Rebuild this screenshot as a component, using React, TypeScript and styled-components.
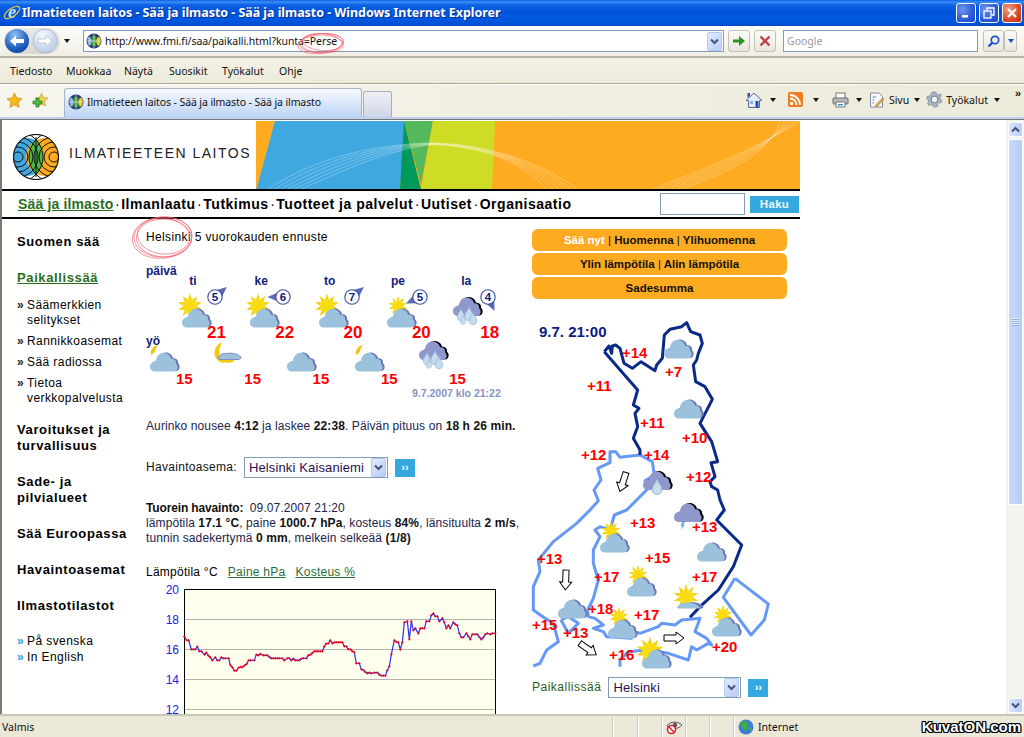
import React from "react";
import styled, { createGlobalStyle } from "styled-components";

const Global = createGlobalStyle`
  html, body { margin: 0; padding: 0; background: #fff; overflow: hidden; }
  * { box-sizing: border-box; }
`;

const SANS = `"Liberation Sans", Arial, sans-serif`;
const UI = `"Noto Sans", "Open Sans", sans-serif`;

const Win = styled.div`
  width: 1024px; height: 737px; overflow: hidden; display: flex; flex-direction: column; position: relative;
  font-family: ${SANS}; background: #fff;
`;
const TitleBar = styled.div`
  height: 26px; flex: none; display: flex; align-items: center; gap: 3px; padding: 0 2px 1px 3px;
  background: linear-gradient(#0a5fe8 0, #3b8ff6 2px, #0c61e6 5px, #0054d8 12px, #0058e0 21px, #0049c8 26px);
`;
const TitleIcon = styled.svg` flex: none; overflow: visible; `;
const TitleText = styled.div`
  flex: 1; color: #fff; font: bold 12.5px/16px ${UI}; text-shadow: 1px 1px 0 #0b2f8f; white-space: nowrap; margin-left: -2px; letter-spacing: -0.05px;
`;
const WinBtn = styled.div<{ $close?: boolean }>`
  width: 20px; height: 20px; border: 1px solid #fff; border-radius: 3px; display: flex; align-items: center; justify-content: center;
  background: ${(p) => p.$close ? "radial-gradient(circle at 30% 30%, #f0a085, #d8492a 60%, #b83014)" : "radial-gradient(circle at 30% 30%, #6f96ee, #2a5ad8 60%, #1f48c0)"};
`;
const AddressRow = styled.div`
  height: 32px; flex: none; display: flex; align-items: center; padding: 0 0 0 4px; position: relative;
  background: linear-gradient(#fdfdfb, #f1efe4); border-bottom: 2px solid #b8b6a8;
`;
const NavPill = styled.div`
  display: flex; align-items: center; width: 56px; height: 26px; border-radius: 13px; background: linear-gradient(#e8e8e4, #d8d8d2); position: relative;
`;
const Caret = styled.span<{ $c?: string }>`
  display: inline-block; width: 0; height: 0; border-left: 3.5px solid transparent; border-right: 3.5px solid transparent;
  border-top: 4px solid ${(p) => p.$c || "#111"};
`;
const BackCaret = styled(Caret)`
  margin-left: 4px;
`;
const AddressBox = styled.div`
  width: 641px; height: 22px; margin-left: 13px; border: 1px solid #7f9db9; background: #fff; display: flex; align-items: center; padding-left: 2px;
  font: 10.5px/14px ${UI}; color: #111; gap: 3px; flex: none;
`;
const AddressText = styled.span` flex: 1; letter-spacing: -0.06px; `;
const DropBtn = styled.div`
  width: 15px; height: 19px; margin-right: 1px; border: 1px solid #b4c8ee; border-radius: 2px; background: linear-gradient(135deg, #e2ebfe, #b8cdf8);
  display: flex; align-items: center; justify-content: center; flex: none;
`;
const ToolBtn = styled.div<{ $ml: number; $w?: number }>`
  width: ${(p) => p.$w || 22}px; height: 22px; margin-left: ${(p) => p.$ml}px; border: 1px solid #c4c2b6; border-radius: 3px; background: linear-gradient(#fbfbf9, #e8e6dc);
  display: flex; align-items: center; justify-content: center; flex: none;
`;
const SearchBox = styled.div`
  width: 195px; height: 22px; margin-left: 7px; border: 1px solid #7f9db9; background: #fff; color: #9a9a9a; font: 10.5px/20px ${UI}; padding-left: 3px; flex: none;
`;
const MenuRow = styled.div`
  height: 26px; flex: none; display: flex; align-items: center; font: 10.5px/14px ${UI}; color: #111; padding-left: 10px;
  background: linear-gradient(#f4f2e8, #ecead9); border-bottom: 1px solid #a8a69a;
`;
const MenuItem = styled.span<{ $w: number }>` width: ${(p) => p.$w}px; flex: none; `;
const TabRow = styled.div`
  height: 33px; flex: none; display: flex; align-items: flex-end; position: relative; padding-left: 6px;
  background: linear-gradient(90deg, #f6f5ee, #ecead9); border-top: 1px solid #fff;
`;
const FavIcons = styled.div` display: flex; gap: 9px; align-self: center; width: 58px; margin-top: -2px; `;
const Tab = styled.div`
  width: 298px; height: 29px; border: 1px solid #a7b4c8; border-bottom: none; border-radius: 3px 3px 0 0;
  background: linear-gradient(#f8fbff, #dfeafb 40%, #bdd5f6); display: flex; align-items: center; gap: 3px; padding: 0 0 2px 3px;
  font: 10.5px/14px ${UI}; letter-spacing: -0.1px; color: #111; white-space: nowrap;
`;
const NewTab = styled.div`
  width: 29px; height: 26px; border: 1px solid #a9afbc; border-bottom: none; border-radius: 3px 3px 0 0; margin-left: 1px;
  background: linear-gradient(#eef0f6, #cfd6e8);
`;
const RightTools = styled.div`
  margin-left: auto; align-self: center; display: flex; align-items: center; font: 10.5px/14px ${UI}; color: #111; padding-right: 24px; margin-top: -3px;
`;
const RTool = styled.span<{ $ml?: number; $g?: number }>`
  display: inline-flex; align-items: center; gap: ${(p) => p.$g ?? 5}px; margin-left: ${(p) => p.$ml || 0}px;
`;
const More = styled.span`
  position: absolute; right: 3px; top: 2px; font: bold 11px/12px ${SANS}; color: #111;
`;
const Strip = styled.div`
  height: 3px; flex: none; background: linear-gradient(#b9cdee 0, #c6d6f2 2px, #777 2px, #777 3px);
`;
const Body = styled.div` flex: 1; min-height: 0; display: flex; `;
const Page = styled.div`
  width: 1006px; flex: none; border-left: 2px solid #7a7a70; overflow: hidden; position: relative; background: #fff;
`;
const Sheet = styled.div` width: 798px; `;
const Header = styled.div`
  height: 69px; display: flex; align-items: center; padding-left: 11px; position: relative;
`;
const LogoText = styled.span`
  font: 14px/18px ${SANS}; letter-spacing: 1.5px; color: #222; margin-left: 10px; margin-top: -4px; white-space: nowrap;
`;
const LogoMark = styled.svg` margin-top: 4px; flex: none; `;
const Banner = styled.svg` position: absolute; left: 254px; top: 1px; `;
const TopNav = styled.div`
  height: 30px; border-top: 2px solid #000; border-bottom: 2px solid #000; display: flex; align-items: center; padding-left: 16px;
  font: bold 14px/18px ${SANS}; letter-spacing: 0.5px; color: #000; white-space: nowrap; position: relative;
`;
const NavLink = styled.a<{ $active?: boolean }>`
  color: ${(p) => (p.$active ? "#2a6e1c" : "#000")}; text-decoration: ${(p) => (p.$active ? "underline" : "none")};
  letter-spacing: ${(p) => (p.$active ? 0.15 : 0.52)}px;
`;
const Dot = styled.span` margin: 0 1.5px; font-weight: 400; letter-spacing: 0; `;
const SearchField = styled.div`
  width: 85px; height: 22px; border: 1px solid #7f9db9; background: #fff; margin-left: auto;
`;
const HakuBtn = styled.div`
  width: 49px; height: 17px; background: #35a8e0; color: #eef8ff; font: bold 11.5px/17px ${SANS}; letter-spacing: 0.3px; text-align: center; margin: 0 1px 0 5px;
`;
const Main = styled.div`
  display: grid; grid-template-columns: 144px 386px 268px; padding-top: 10px;
`;
const Side = styled.nav` padding: 5px 0 0 15px; display: flex; flex-direction: column; `;
const SideHead = styled.div<{ $mt?: number; $active?: boolean }>`
  font: bold 13px/16px ${SANS}; letter-spacing: 0.62px; margin-top: ${(p) => p.$mt ?? 20}px;
  color: ${(p) => (p.$active ? "#2a6e1c" : "#000")}; text-decoration: ${(p) => (p.$active ? "underline" : "none")}; white-space: nowrap;
`;
const SubList = styled.ul<{ $mt: number }>` list-style: none; margin: ${(p) => p.$mt}px 0 0; padding: 0; `;
const SubItem = styled.li<{ $mt?: number; $blue?: boolean }>`
  font: 12px/15px ${SANS}; letter-spacing: 0.42px; color: #000; padding-left: 10px; text-indent: -10px; margin-top: ${(p) => p.$mt ?? 6}px;
  &::before { content: "»"; display: inline-block; width: 10px; text-indent: 0; color: ${(p) => (p.$blue ? "#2f9be8" : "#222")}; font-weight: bold; letter-spacing: 0; }
`;
const Center = styled.div` display: flex; flex-direction: column; padding-top: 1px; `;
const Line = styled.div<{ $mt?: number }>`
  font: 12px/15px ${SANS}; letter-spacing: 0.1px; color: #22224c; margin-top: ${(p) => p.$mt ?? 0}px; white-space: nowrap;
  b { color: #111; }
`;
const ObsLabel = styled.b` letter-spacing: -0.14px; margin-right: 3px; `;
const Heading = styled.div`
  font: 12px/15px ${SANS}; letter-spacing: 0.37px; color: #000; white-space: nowrap;
`;
const Period = styled.div<{ $mt: number }>`
  font: bold 12px/15px ${SANS}; color: #10207c; margin-top: ${(p) => p.$mt}px;
`;
const DayGrid = styled.div` display: grid; grid-template-columns: repeat(5, 68.3px); margin: -5px 0 0 26px; `;
const DayCell = styled.div` height: 60px; position: relative; display: flex; flex-direction: column; `;
const DayName = styled.div`
  width: 42px; text-align: center; font: bold 12px/15px ${SANS}; color: #10207c;
`;
const IconSlot = styled.div<{ $l: number; $t: number }>`
  margin: ${(p) => p.$t}px 0 0 ${(p) => p.$l}px; height: 34px;
`;
const BigTemp = styled.div<{ $size: number; $l: number; $t: number }>`
  position: absolute; left: ${(p) => p.$l}px; top: ${(p) => p.$t}px; font: bold ${(p) => p.$size}px/20px ${SANS}; color: #f00;
`;
const WindBadge = styled.svg` position: absolute; left: 25px; top: 5px; overflow: visible; `;
const NightGrid = styled.div` display: grid; grid-template-columns: repeat(5, 68.3px); margin: -10px 0 0 -1px; `;
const NightCell = styled.div` height: 46px; position: relative; `;
const Stamp = styled.div`
  font: bold 10.5px/13px ${SANS}; color: #8594c4; margin: 2px 0 0 266px; white-space: nowrap;
`;
const FieldRow = styled.div<{ $mt: number; $gap: number }>`
  display: flex; align-items: center; gap: ${(p) => p.$gap}px; margin-top: ${(p) => p.$mt}px;
`;
const FieldLabel = styled.span<{ $green?: boolean }>`
  font: 12px/15px ${SANS}; letter-spacing: ${(p) => (p.$green ? 0.5 : 0.3)}px; color: ${(p) => (p.$green ? "#2a6020" : "#111")}; white-space: nowrap;
`;
const SelectBox = styled.div<{ $w: number }>`
  width: ${(p) => p.$w}px; height: 21px; border: 1px solid #7f9db9; background: #fff; display: flex; align-items: center; justify-content: space-between;
  font: 13px/17px ${SANS}; letter-spacing: 0.13px; color: #2a1050; padding-left: 4px; flex: none;
`;
const GoBtn = styled.div`
  width: 20px; height: 18px; background: #35a8e0; color: #fff; font: bold 11px/16px ${SANS}; text-align: center; flex: none;
`;
const ChartTabs = styled.div`
  margin-top: 19px; display: flex; font: 12px/15px ${SANS}; letter-spacing: 0.25px; white-space: nowrap;
`;
const ChartTab = styled.span<{ $link?: boolean; $ml?: number }>`
  margin-left: ${(p) => p.$ml || 0}px; color: ${(p) => (p.$link ? "#2a6e3a" : "#000")}; text-decoration: ${(p) => (p.$link ? "underline" : "none")};
`;
const ChartSvg = styled.svg` display: block; margin-top: 0; flex: none; `;
const RightCol = styled.div` display: flex; flex-direction: column; `;
const Pills = styled.div` display: flex; flex-direction: column; gap: 2px; width: 255px; `;
const Pill = styled.div`
  height: 22px; border-radius: 6px; background: #ffab22; text-align: center; font: bold 11.5px/22px ${SANS}; color: #111; white-space: nowrap;
`;
const PillNow = styled.span` color: #fff; `;
const PillSep = styled.span` font-weight: 400; `;
const MapCanvas = styled.div` width: 275px; height: 360px; margin: 11px 0 0 -7px; position: relative; `;
const MapLines = styled.svg` position: absolute; left: 0; top: 0; `;
const MapStamp = styled.div`
  position: absolute; left: 14px; top: 13px; font: bold 15px/18px ${SANS}; color: #0a2080;
`;
const Spot = styled.div<{ $x: number; $y: number }>`
  position: absolute; left: ${(p) => p.$x - 525}px; top: ${(p) => p.$y - 310}px;
`;
const MapTemp = styled(Spot)`
  font: bold 15px/18px ${SANS}; color: #f00; margin-top: -9px;
`;
const Scribble = styled.svg<{ $x: number; $y: number }>`
  position: absolute; left: ${(p) => p.$x}px; top: ${(p) => p.$y}px; pointer-events: none; overflow: visible;
`;
const Scroll = styled.div`
  width: 18px; flex: none; background: #f4f3ee; display: flex; flex-direction: column; padding: 2px 1px 1px 1px; border-left: 1px solid #eee;
`;
const ScrollBtn = styled.div`
  height: 15px; border: 1px solid #fff; border-radius: 2px; background: linear-gradient(90deg, #d8e4fb, #b8cdf7); display: flex; align-items: center; justify-content: center; flex: none;
`;
const ScrollThumb = styled.div`
  height: 366px; margin-top: 2px; border: 1px solid #fff; border-radius: 2px; background: linear-gradient(90deg, #c8d8f9, #b6ccf6); display: flex; align-items: center; justify-content: center; flex: none;
`;
const Grip = styled.div` width: 7px; height: 8px; background: repeating-linear-gradient(#eef3fe 0 1px, #8fa9dc 1px 2px); `;
const ScrollFill = styled.div` flex: 1; `;
const StatusBar = styled.div`
  height: 23px; flex: none; display: flex; align-items: center; position: relative; background: #ebe8d8; border-top: 2px solid #c8c6b8;
  font: 10.5px/14px ${UI}; color: #111;
`;
const StatusText = styled.span` width: 612px; padding-left: 2px; flex: none; `;
const StatusCell = styled.span<{ $w: number; $g?: number }>`
  width: ${(p) => p.$w}px; height: 21px; border-left: 1px solid #d0cebe; box-shadow: inset 1px 0 0 #fff; flex: none; display: flex; align-items: center; gap: ${(p) => p.$g ?? 0}px; padding-left: 4px;
`;
const Watermark = styled.span`
  position: absolute; right: 3px; top: 2px; font: bold 15px/18px ${SANS}; color: #fff; letter-spacing: 0;
  text-shadow: 1px 0 0 #000, -1px 0 0 #000, 0 1px 0 #000, 0 -1px 0 #000, 1px 1px 0 #000, -1px -1px 0 #000, 1px -1px 0 #000, -1px 1px 0 #000;
`;
const WeatherSvg = styled.svg` display: block; overflow: visible; `;

/* ---------- drawings ---------- */
const CLOUD = "M5 21C1.5 21 0 18.5 0 16C0 12.8 2.8 10.6 5.8 11C6.2 5.6 9.6 2.5 13.5 2.5C17.4 2.5 20.5 5.2 21 8.2C24.4 7.8 26.6 10.4 26 13.2C27.8 14.2 28.2 17.6 27 19.3C26 21 24.6 21 23.4 21Z";

const Cloud = ({ x, y, dark }: { x: number; y: number; dark?: boolean }) => (
  <g transform={`translate(${x} ${y})`}>
    <path d={CLOUD} fill={dark ? "#000" : "#6b77b9"} transform="translate(2 -0.5)" />
    <path d={CLOUD} fill={dark ? "#8f98cc" : "#9cc1dd"} />
  </g>
);
const Sun = ({ cx, cy, r, R }: { cx: number; cy: number; r: number; R: number }) => (
  <g>
    {Array.from({ length: 10 }).map((_, i) => {
      const a = (i * Math.PI) / 5 - Math.PI / 2;
      const p = (ang: number, rad: number) => `${cx + Math.cos(ang) * rad},${cy + Math.sin(ang) * rad}`;
      return <polygon key={i} points={`${p(a - 0.28, r)} ${p(a, R)} ${p(a + 0.28, r)}`} fill="#f5d20c" />;
    })}
    <circle cx={cx} cy={cy} r={r} fill="#f8dc10" />
  </g>
);
const Drop = ({ x, y, s = 1 }: { x: number; y: number; s?: number }) => (
  <path transform={`translate(${x} ${y}) scale(${s})`} d="M0 -7C1 -3 4 -1 4 2C4 4.5 2.2 6 0 6C-2.2 6 -4 4.5 -4 2C-4 -1 -1 -3 0 -7Z" fill="#c5dcee" stroke="#88a8cf" strokeWidth="0.6" />
);
type Kind = "sun" | "sunSmall" | "sunBig" | "cloud" | "moonCloud" | "moonFog" | "rain" | "rainOne" | "dark" | "sunThin";
const Weather = ({ kind }: { kind: Kind }) => (
  <WeatherSvg width="36" height="36" viewBox="0 0 36 36">
    {kind === "sun" && <Sun cx={13} cy={11} r={7} R={12.5} />}
    {kind === "sunSmall" && <Sun cx={16} cy={11} r={5.5} R={10} />}
    {kind === "sunBig" && <Sun cx={13} cy={15} r={8} R={14} />}
    {(kind === "sun" || kind === "sunSmall" || kind === "sunBig" || kind === "cloud") && <Cloud x={5} y={11.5} />}
    {kind === "moonCloud" && (<><path d="M13 6C8 7 5 11 6 16L10 13C10 11 11 8.5 13 6Z" fill="#f0c410" /><Cloud x={5} y={11.5} /></>)}
    {kind === "moonFog" && (
      <>
        <path d="M9 3C4 5 0 11 2 17C3.5 21 7 24 12 24C9 22 7 19 6.5 15C6 11 7 7 9 3Z" fill="#f2c80e" />
        <path d="M6 17.5C8 15 10 14 14 14.5C20 13.5 25 15 28 18C28.5 19 27.5 20.5 25 20.5H8C5 20.5 4.5 19 6 17.5Z" fill="#9cc1dd" stroke="#6b77b9" strokeWidth="0.8" />
        <path d="M8 21C12 24.5 18 25 22 21Z" fill="#f2c80e" />
      </>
    )}
    {kind === "sunThin" && (
      <>
        <Sun cx={14} cy={11} r={7} R={13} />
        <path d="M6 20C9 17 13 16 17 16.5C22 15.5 28 17 31 20C32 22 30 22.5 28 22.5H8C5 22.5 4.5 21.5 6 20Z" fill="#9cc1dd" />
        <path d="M18 16.5C22 15.5 28 17 31 20C32 22 30 22.5 28 22.5C28 20 24 17.5 18 16.5Z" fill="#6b77b9" />
      </>
    )}
    {kind === "rain" && (
      <>
        <Cloud x={1} y={0} dark />
        <Drop x={9} y={20} s={0.95} /><Drop x={17} y={19} s={1.1} /><Drop x={21} y={24} s={0.95} /><Drop x={11} y={25} s={0.7} />
      </>
    )}
    {kind === "rainOne" && (<><Cloud x={1} y={0} dark /><Drop x={15} y={18} s={1.25} /></>)}
    {kind === "dark" && (
      <>
        <Cloud x={3} y={0} dark />
        <path d="M11 21L9.5 25.5L11.5 25L10 29L14 24L12 24.5L14 21Z" fill="#6fa8dc" />
      </>
    )}
  </WeatherSvg>
);
const Wind = ({ n, angle }: { n: number; angle: number }) => (
  <WindBadge width="36" height="36" viewBox="0 0 36 36">
    <polygon points="22,13 22,23 33.5,18" fill="#5a6ab8" transform={`rotate(${angle} 18 18)`} />
    <circle cx="18" cy="18" r="7.2" fill="#fff" stroke="#3d4ea5" strokeWidth="1.1" />
    <text x="18" y="22" textAnchor="middle" fontFamily="Liberation Sans" fontWeight="bold" fontSize="11.5" fill="#10207c">{n}</text>
  </WindBadge>
);
const Globe = ({ s = 16 }: { s?: number }) => (
  <svg width={s} height={s} viewBox="0 0 16 16" style={{ flex: "none" }}>
    <circle cx="8" cy="8" r="7.5" fill="#28406c" />
    <path d="M3 3.5C5 5 6 6 6 8C6 10 5 12 3.5 13L2 11L1.5 5Z" fill="#8fb8e8" />
    <path d="M13 3.5C11 5 10 6 10 8C10 10 11 12 12.5 13L14.5 10.5V5Z" fill="#e8d020" />
    <path d="M6 3H10L10.5 8L10 13H6L5.5 8Z" fill="#3f9a3a" />
    <path d="M8 1V15M1 8H15" stroke="#dfe6f0" strokeWidth="0.7" />
  </svg>
);
const Down = ({ c = "#45527c" }: { c?: string }) => (
  <svg width="9" height="7" viewBox="0 0 9 7" style={{ display: "block" }}><path d="M1 1.5L4.5 5L8 1.5" fill="none" stroke={c} strokeWidth="2" /></svg>
);
const Star = ({ s = 17 }: { s?: number }) => (
  <svg width={s} height={s} viewBox="0 0 17 17" style={{ display: "block", flex: "none" }}><path d="M8.5 1L10.7 6L16 6.6L12 10.2L13.2 15.5L8.5 12.8L3.8 15.5L5 10.2L1 6.6L6.3 6Z" fill="#f7b818" stroke="#c88a10" strokeWidth="0.7" /></svg>
);

const CHART: [number, number][] = [[163,230],[170,240],[176,241],[184,268],[190,268],[196,268],[202,260],[208,274],[214,274],[224,284],[229,278],[235,287],[241,292],[247,301],[256,292],[262,301],[268,301],[274,292],[280,295],[286,295],[296,295],[301,315],[307,322],[313,332],[319,332],[326,323],[332,321],[338,321],[344,316],[350,312],[356,301],[362,301],[373,301],[379,284],[385,286],[391,282],[400,286],[406,286],[412,286],[418,291],[424,295],[430,295],[436,295],[442,295],[448,295],[457,295],[463,301],[472,295],[478,295],[484,301],[490,296],[496,301],[502,301],[508,301],[514,296],[520,295],[529,295],[535,286],[541,284],[547,279],[553,274],[559,274],[565,274],[571,274],[577,274],[583,259],[589,251],[595,250],[601,241],[607,250],[613,247],[619,247],[625,247],[631,247],[637,247],[643,259],[649,259],[655,268],[661,268],[667,274],[673,277],[679,310],[688,310],[694,328],[700,330],[706,336],[712,340],[718,338],[724,340],[733,338],[742,338],[748,344],[754,347],[760,347],[766,347],[772,331],[778,319],[784,283],[793,241],[799,246],[805,247],[811,268],[817,247],[823,187],[832,184],[838,238],[844,184],[850,211],[856,205],[865,220],[871,205],[877,205],[883,205],[889,184],[898,184],[904,166],[910,160],[916,169],[922,169],[928,184],[937,175],[943,187],[949,205],[955,196],[961,205],[970,187],[976,193],[982,196],[988,220],[994,232],[1000,232],[1009,220],[1015,229],[1021,238],[1027,223],[1036,223],[1042,223],[1048,231],[1054,238],[1060,232],[1066,223],[1072,220],[1081,223],[1087,220],[1096,220]];

const Chart = () => {
  const pts = CHART.map(([x, y]) => [x / 3 - 16, y / 3 - 20]);
  return (
    <ChartSvg width="360" height="140" viewBox="0 0 360 140">
      <rect x="38.5" y="9.5" width="311" height="135" fill="#ffffee" stroke="#000" strokeWidth="1" />
      {[39.5, 69.5, 99.5, 129.5].map((y) => <line key={y} x1="39" x2="349" y1={y} y2={y} stroke="#b4b4ac" strokeWidth="1" />)}
      {[[20, 14], [18, 44], [16, 74], [14, 104], [12, 134]].map(([t, y]) => (
        <text key={t} x="33" y={y} textAnchor="end" fontFamily="Liberation Sans" fontSize="12" fill="#2020e8">{t}</text>
      ))}
      <polyline points={pts.map((p) => p.join(",")).join(" ")} fill="none" stroke="#3030f5" strokeWidth="1.2" />
      <path d={pts.map(([x, y]) => `M${x - 1.3} ${y}h2.6M${x} ${y - 1.3}v2.6`).join("")} stroke="#f00010" strokeWidth="0.8" fill="none" />
    </ChartSvg>
  );
};

const ellipseRings = (cx: number, cy: number, rx: number, ry: number) =>
  [[0, 0, 1, -3], [1, 1, 0.95, 2], [-1, 0.5, 1.03, -6], [0.5, -1, 0.9, 5]].map(([dx, dy, k, r], i) => (
    <ellipse key={i} cx={cx + dx} cy={cy + dy} rx={rx * k} ry={ry * k} transform={`rotate(${r} ${cx} ${cy})`} fill="none" stroke="#f0606c" strokeWidth="0.8" opacity="0.8" />
  ));

const Arrow = ({ x, y, a }: { x: number; y: number; a: number }) => (
  <g transform={`translate(${x} ${y}) rotate(${a})`}>
    <polygon points="-10,-3 2,-3 2,-6 10,0 2,6 2,3 -10,3" fill="#fff" stroke="#000" strokeWidth="1" />
  </g>
);

const MAP_DARK1 = "238,125 252,108 260,130 262,108 272,105 285,115 297,160 322,175 348,155 390,182 395,165 412,145 418,75 435,58 470,50 485,38 497,65 525,75 532,100 520,130 515,150 505,165 512,215 540,230 562,268 525,340 560,395 578,455 558,458 570,500 555,515 560,530 578,540 585,570 598,600 575,630 650,705 625,770 580,840 525,890 495,922";
const MAP_DARK2 = "238,125 290,185 338,240 325,285 342,295 330,310 338,350 325,385 345,420 345,435";
const MAP_LIGHT1 = "345,435 285,442 272,425 255,425 255,458 218,475 228,510 207,540 220,572 195,600 155,640 85,695 40,750 45,785 25,830 25,900 60,925 85,940 100,995 65,1020 55,1040 45,1060 25,1068";
const MAP_LIGHT2 = "345,435 382,455 388,495 360,512 375,530 305,600 268,615 255,660 225,650 210,660 225,680 205,720 205,760 220,810 205,865 188,900 190,920 210,925 235,945 205,955 235,965 245,980 320,985 330,965 345,970 400,950 410,940 450,945 470,930 525,925 510,965 545,985 560,1005 550,1000 515,1020 500,1010 490,1050 430,1030 360,1020 310,1025 285,1050 285,1070";
const MAP_LAKE = "108,930 130,920 160,940 130,970 108,930";
const MAP_ISLE = "630,805 595,862 678,975 718,930 730,882 630,805";

const TEMPS: [string, number, number][] = [["+14",622,353],["+7",665,372],["+11",587,386],["+11",640,423],["+10",682,438],["+12",581,455],["+14",644,455],["+12",686,477],["+13",630,523],["+13",692,527],["+15",645,558],["+17",594,577],["+17",692,577],["+13",537,559],["+18",588,609],["+17",634,615],["+15",532,625],["+13",563,633],["+16",609,655],["+20",712,647]];
const ICONS: [Kind, number, number][] = [["cloud",659,326],["cloud",669,386],["rainOne",642,469],["dark",671,501],["sunSmall",595,520],["cloud",692,529],["sunSmall",622,564],["sunThin",672,586],["cloud",553,586],["sunSmall",603,606],["sunSmall",707,604],["sunBig",637,636]];

const DAYS: { d: string; n: number; a: number; k: Kind; t: number; l: number }[] = [
  { d: "ti", n: 5, a: -40, k: "sun", t: 21, l: 5 },
  { d: "ke", n: 6, a: 180, k: "sun", t: 22, l: 5 },
  { d: "to", n: 7, a: -40, k: "sun", t: 20, l: 5 },
  { d: "pe", n: 5, a: 155, k: "sunSmall", t: 20, l: 5 },
  { d: "la", n: 4, a: 65, k: "rain", t: 18, l: 7 },
];
const NIGHTS: Kind[] = ["moonCloud", "moonFog", "cloud", "moonCloud", "rain"];

export default function App() {
  return (
    <Win>
      <Global />
      <TitleBar>
        <TitleIcon width="18" height="18" viewBox="0 0 18 18">
          <text x="9" y="14" textAnchor="middle" fontFamily="Liberation Serif" fontStyle="italic" fontWeight="bold" fontSize="18" fill="#bfe6ff">e</text>
          <ellipse cx="9" cy="8.5" rx="9" ry="4" fill="none" stroke="#f2c23c" strokeWidth="1.2" transform="rotate(-35 9 8.5)" />
        </TitleIcon>
        <TitleText>Ilmatieteen laitos - Sää ja ilmasto - Sää ja ilmasto - Windows Internet Explorer</TitleText>
        <WinBtn><svg width="12" height="12" viewBox="0 0 12 12"><rect x="2" y="8" width="6" height="2.5" fill="#fff" /></svg></WinBtn>
        <WinBtn><svg width="14" height="14" viewBox="0 0 14 14" fill="none" stroke="#fff" strokeWidth="1.3"><rect x="2" y="5" width="7" height="7" /><path d="M5 4.5V2H12V9H9.5" /></svg></WinBtn>
        <WinBtn $close><svg width="12" height="12" viewBox="0 0 12 12"><path d="M2 2L10 10M10 2L2 10" stroke="#fff" strokeWidth="2.2" /></svg></WinBtn>
      </TitleBar>

      <AddressRow>
        <NavPill>
          <svg width="56" height="26" viewBox="0 0 56 26">
            <defs>
              <radialGradient id="bk" cx="0.4" cy="0.25" r="0.9"><stop offset="0" stopColor="#8fc0f0" /><stop offset="0.6" stopColor="#1f62c0" /><stop offset="1" stopColor="#0c3a8a" /></radialGradient>
              <radialGradient id="fw" cx="0.4" cy="0.25" r="0.9"><stop offset="0" stopColor="#f4f8ff" /><stop offset="1" stopColor="#aec4e4" /></radialGradient>
            </defs>
            <circle cx="13" cy="13" r="12" fill="url(#bk)" />
            <path d="M6 13L12 7.5V11H20V15H12V18.5Z" fill="#fff" />
            <circle cx="41" cy="13" r="12" fill="url(#fw)" stroke="#b0bccc" />
            <path d="M48 13L42 7.5V11H34V15H42V18.5Z" fill="#fff" stroke="#a8b8d0" strokeWidth="0.7" />
          </svg>
        </NavPill>
        <BackCaret />
        <AddressBox>
          <Globe />
          <AddressText>http://www.fmi.fi/saa/paikalli.html?kunta=Perse</AddressText>
          <DropBtn><Down /></DropBtn>
        </AddressBox>
        <ToolBtn $ml={4}><svg width="14" height="12" viewBox="0 0 14 12"><path d="M1 4.5H7V1L13 6L7 11V7.5H1Z" fill="#2f8f28" /></svg></ToolBtn>
        <ToolBtn $ml={4}><svg width="12" height="12" viewBox="0 0 12 12"><path d="M1.5 1.5L10.5 10.5M10.5 1.5L1.5 10.5" stroke="#c0404c" strokeWidth="2.4" /></svg></ToolBtn>
        <SearchBox>Google</SearchBox>
        <ToolBtn $ml={5} $w={21}><svg width="13" height="13" viewBox="0 0 13 13" fill="none" stroke="#1a50c8" strokeWidth="1.7"><circle cx="8" cy="5" r="3.7" /><path d="M5.4 7.6L1.5 11.5" strokeWidth="2.2" /></svg></ToolBtn>
        <ToolBtn $ml={0} $w={13}><Caret $c="#1a50c8" /></ToolBtn>
        <Scribble $x={298} $y={4} width="50" height="26">{ellipseRings(23.5, 13, 22, 9.5)}</Scribble>
      </AddressRow>

      <MenuRow>
        <MenuItem $w={56}>Tiedosto</MenuItem>
        <MenuItem $w={58}>Muokkaa</MenuItem>
        <MenuItem $w={45}>Näytä</MenuItem>
        <MenuItem $w={53}>Suosikit</MenuItem>
        <MenuItem $w={57}>Työkalut</MenuItem>
        <MenuItem $w={40}>Ohje</MenuItem>
      </MenuRow>

      <TabRow>
        <FavIcons>
          <Star />
          <svg width="17" height="17" viewBox="0 0 17 17" style={{ display: "block" }}>
            <path d="M9.5 1L11.5 5.5L16 6L12.5 9.5L13.5 14L9.5 12L5 14L6.5 9.5L3 6L7.5 5.5Z" fill="#f0cf50" stroke="#b89a30" strokeWidth="0.6" />
            <path d="M4 6H7V9H10V12H7V15H4V12H1V9H4Z" fill="#4fb83a" stroke="#1f7a1f" strokeWidth="0.7" />
          </svg>
        </FavIcons>
        <Tab><Globe />Ilmatieteen laitos - Sää ja ilmasto - Sää ja ilmasto</Tab>
        <NewTab />
        <RightTools>
          <RTool $g={7}>
            <svg width="18" height="18" viewBox="0 0 18 18"><path d="M9 2L1 9.5H3.5V16.5H14.5V9.5H17Z" fill="#e4ebf6" stroke="#5a6a98" strokeWidth="1" /><rect x="10.5" y="10" width="3" height="6.5" fill="#1f4fa8" /><rect x="5" y="10" width="3" height="3" fill="#8fb0e0" /><path d="M2.5 2H5V5L2.5 7Z" fill="#3a4ea8" /></svg>
            <Caret />
          </RTool>
          <RTool $ml={12} $g={10}>
            <svg width="15" height="15" viewBox="0 0 15 15"><rect width="15" height="15" rx="2" fill="#ee7b1e" /><circle cx="3.6" cy="11.4" r="1.7" fill="#fff" /><path d="M2 6.5A6.5 6.5 0 0 1 8.5 13M2 3A10 10 0 0 1 12 13" fill="none" stroke="#fff" strokeWidth="1.8" /></svg>
            <Caret />
          </RTool>
          <RTool $ml={13} $g={7}>
            <svg width="17" height="16" viewBox="0 0 17 16"><rect x="4" y="1" width="9" height="6" fill="#fff" stroke="#777" /><rect x="1" y="6" width="15" height="6" rx="1" fill="#b8b8b8" stroke="#666" /><rect x="4" y="10" width="9" height="5" fill="#fff" stroke="#777" /><rect x="6" y="12" width="5" height="1.5" fill="#3a8fc8" /></svg>
            <Caret />
          </RTool>
          <RTool $ml={7} $g={4}>
            <svg width="16" height="16" viewBox="0 0 16 16"><path d="M1.5 1H10L13.5 4.5V15H1.5Z" fill="#f8f8fa" stroke="#8a8a96" /><path d="M3.5 5H7M3.5 8H5M3.5 11H5" stroke="#6a78a8" /><path d="M7 12.5L13.5 6L15 7.5L8.5 14L6.5 14.5Z" fill="#d8b048" stroke="#806020" strokeWidth="0.5" /></svg>
            Sivu
          </RTool>
          <RTool $ml={5}><Caret /></RTool>
          <RTool $ml={6} $g={3}>
            <svg width="17" height="17" viewBox="0 0 17 17"><path d="M7 1H10L10.4 3L12.6 3.9L14.3 2.8L15.2 5L13.9 6.7L14.4 8.5L16 9.5L15 12L13 11.6L11.6 13L12 15L9.5 16H7.5L6.8 14.2L4.7 13.6L3 14.6L1.5 12.5L2.6 10.8L2 8.6L0.6 7.5L1.6 5L3.5 5.2L5 3.7L5 2Z" fill="#a8b4c4" stroke="#6a7888" strokeWidth="0.6" /><circle cx="8.5" cy="8.5" r="3.4" fill="#eef2f6" stroke="#6a7888" /></svg>
            Työkalut
          </RTool>
          <RTool $ml={6}><Caret /></RTool>
        </RightTools>
        <More>»</More>
      </TabRow>
      <Strip />

      <Body>
        <Page>
          <Sheet>
            <Header>
              <LogoMark width="46" height="46" viewBox="0 0 46 46">
                <defs>
                  <clipPath id="lc"><circle cx="23" cy="23" r="22.5" /></clipPath>
                </defs>
                <g clipPath="url(#lc)">
                  <rect width="46" height="46" fill="#fff" />
                  <circle cx="14" cy="23" r="19" fill="#3fa8e0" />
                  <circle cx="32" cy="23" r="19" fill="#ffab22" />
                  <path d="M23 5.5C28 10 29.5 16 29.5 23C29.5 30 28 36 23 40.5C18 36 16.5 30 16.5 23C16.5 16 18 10 23 5.5Z" fill="#4ab848" />
                  <g fill="none" stroke="#111" strokeWidth="1">
                    {[5, 10, 15, 20, 25].map((r) => <circle key={r} cx="5" cy="23" r={r} />)}
                    {[5, 10, 15, 20, 25].map((r) => <circle key={"b" + r} cx="41" cy="23" r={r} />)}
                    <path d="M23 3V43" />
                  </g>
                </g>
                <circle cx="23" cy="23" r="22.5" fill="none" stroke="#111" strokeWidth="1.2" />
              </LogoMark>
              <LogoText>ILMATIEETEEN LAITOS</LogoText>
              <Banner width="544" height="68" viewBox="256 121 544 68">
                <rect x="256" y="121" width="544" height="68" fill="#ffab22" />
                <polygon points="275,121 406,121 400,189 256.5,189" fill="#3fa8e0" />
                <polygon points="404,121 400,189 421,189" fill="#009a5c" />
                <polygon points="404,121 433,121 421,184" fill="#55b85a" />
                <polygon points="433,121 495,121 492,189 421,189" fill="#cfdc26" />
                <g fill="none" stroke="#fff" strokeOpacity="0.42" strokeWidth="0.7">
                  {[0, 3, 6, 9, 12, 15].map((d) => (
                    <g key={d}>
                      <path d={`M${268 + d * 2.2} 189C${315 + d * 2} ${158 + d * 0.8} ${375 + d} ${144 + d * 0.3} ${430 + d * 0.3} ${143 + d * 0.1}C${490 + d} ${143 + d * 0.4} ${545 - d} ${165 + d * 0.5} ${577 - d * 2} 189`} />
                      <path d={`M${653 + d * 2} 189C${700 + d * 1.5} ${170 + d * 0.2} ${745 + d * 1.5} ${155 + d * 0.2} ${802 - d * 1.4} ${120}`} />
                    </g>
                  ))}
                </g>
              </Banner>
            </Header>
            <TopNav>
              <NavLink $active>Sää ja ilmasto</NavLink><Dot>·</Dot>
              <NavLink>Ilmanlaatu</NavLink><Dot>·</Dot>
              <NavLink>Tutkimus</NavLink><Dot>·</Dot>
              <NavLink>Tuotteet ja palvelut</NavLink><Dot>·</Dot>
              <NavLink>Uutiset</NavLink><Dot>·</Dot>
              <NavLink>Organisaatio</NavLink>
              <SearchField />
              <HakuBtn>Haku</HakuBtn>
            </TopNav>
            <Main>
              <Side>
                <SideHead $mt={0}>Suomen sää</SideHead>
                <SideHead $active>Paikallissää</SideHead>
                <SubList $mt={12}>
                  <SubItem $mt={0}>Säämerkkien selitykset</SubItem>
                  <SubItem>Rannikkoasemat</SubItem>
                  <SubItem>Sää radiossa</SubItem>
                  <SubItem>Tietoa verkkopalvelusta</SubItem>
                </SubList>
                <SideHead $mt={16}>Varoitukset ja<br />turvallisuus</SideHead>
                <SideHead>Sade- ja<br />pilvialueet</SideHead>
                <SideHead>Sää Euroopassa</SideHead>
                <SideHead>Havaintoasemat</SideHead>
                <SideHead>Ilmastotilastot</SideHead>
                <SubList $mt={20}>
                  <SubItem $mt={0} $blue>På svenska</SubItem>
                  <SubItem $mt={1} $blue>In English</SubItem>
                </SubList>
              </Side>

              <Center>
                <Heading>Helsinki 5 vuorokauden ennuste</Heading>
                <Period $mt={19}>päivä</Period>
                <DayGrid>
                  {DAYS.map((d) => (
                    <DayCell key={d.d}>
                      <DayName>{d.d}</DayName>
                      <IconSlot $l={d.l} $t={6}><Weather kind={d.k} /></IconSlot>
                      <Wind n={d.n} angle={d.a} />
                      <BigTemp $size={17} $l={35} $t={49}>{d.t}</BigTemp>
                    </DayCell>
                  ))}
                </DayGrid>
                <Period $mt={0}>yö</Period>
                <NightGrid>
                  {NIGHTS.map((k, i) => (
                    <NightCell key={i}>
                      <Weather kind={k} />
                      <BigTemp $size={15} $l={31} $t={30}>15</BigTemp>
                    </NightCell>
                  ))}
                </NightGrid>
                <Stamp>9.7.2007 klo 21:22</Stamp>
                <Line $mt={19}>Aurinko nousee <b>4:12</b> ja laskee <b>22:38</b>. Päivän pituus on <b>18 h 26 min.</b></Line>
                <FieldRow $mt={23} $gap={7}>
                  <FieldLabel>Havaintoasema:</FieldLabel>
                  <SelectBox $w={144}>Helsinki Kaisaniemi<DropBtn><Down /></DropBtn></SelectBox>
                  <GoBtn>››</GoBtn>
                </FieldRow>
                <Line $mt={23}><ObsLabel>Tuorein havainto:</ObsLabel> 09.07.2007 21:20</Line>
                <Line>lämpötila <b>17.1 °C</b>, paine <b>1000.7 hPa</b>, kosteus <b>84%</b>, länsituulta <b>2 m/s</b>,</Line>
                <Line>tunnin sadekertymä <b>0 mm</b>, melkein selkeää <b>(1/8)</b></Line>
                <ChartTabs>
                  <ChartTab>Lämpötila °C</ChartTab>
                  <ChartTab $link $ml={10}>Paine hPa</ChartTab>
                  <ChartTab $link $ml={10}>Kosteus %</ChartTab>
                </ChartTabs>
                <Chart />
              </Center>

              <RightCol>
                <Pills>
                  <Pill><PillNow>Sää nyt</PillNow> <PillSep>|</PillSep> Huomenna <PillSep>|</PillSep> Ylihuomenna</Pill>
                  <Pill>Ylin lämpötila <PillSep>|</PillSep> Alin lämpötila</Pill>
                  <Pill>Sadesumma</Pill>
                </Pills>
                <MapCanvas>
                  <MapLines width="275" height="360" viewBox="0 0 825 1080">
                    <g fill="none" strokeWidth="9" strokeLinejoin="round">
                      <polyline points={MAP_LIGHT1} stroke="#6699f5" />
                      <polyline points={MAP_LIGHT2} stroke="#6699f5" />
                      <polyline points={MAP_LAKE} stroke="#6699f5" />
                      <polyline points={MAP_ISLE} stroke="#6699f5" />
                      <polyline points={MAP_DARK1} stroke="#0a2a88" />
                      <polyline points={MAP_DARK2} stroke="#0a2a88" />
                    </g>
                    <g transform="scale(3)">
                      <Arrow x={98} y={172} a={108} />
                      <Arrow x={40.7} y={270} a={92} />
                      <Arrow x={63} y={339} a={35} />
                      <Arrow x={149} y={328} a={0} />
                    </g>
                  </MapLines>
                  <MapStamp>9.7. 21:00</MapStamp>
                  {ICONS.map(([k, x, y], i) => <Spot key={i} $x={x} $y={y}><Weather kind={k} /></Spot>)}
                  {TEMPS.map(([t, x, y], i) => <MapTemp key={i} $x={x} $y={y}>{t}</MapTemp>)}
                </MapCanvas>
                <FieldRow $mt={7} $gap={7}>
                  <FieldLabel $green>Paikallissää</FieldLabel>
                  <SelectBox $w={133}>Helsinki<DropBtn><Down /></DropBtn></SelectBox>
                  <GoBtn>››</GoBtn>
                </FieldRow>
              </RightCol>
            </Main>
          </Sheet>
          <Scribble $x={129} $y={95} width="66" height="46">{ellipseRings(32, 22, 29, 20)}</Scribble>
        </Page>
        <Scroll>
          <ScrollBtn><svg width="9" height="7" viewBox="0 0 9 7"><path d="M1 5.5L4.5 2L8 5.5" fill="none" stroke="#45527c" strokeWidth="2" /></svg></ScrollBtn>
          <ScrollThumb><Grip /></ScrollThumb>
          <ScrollFill />
          <ScrollBtn><Down /></ScrollBtn>
        </Scroll>
      </Body>

      <StatusBar>
        <StatusText>Valmis</StatusText>
        <StatusCell $w={25} />
        <StatusCell $w={24} />
        <StatusCell $w={24}>
          <svg width="17" height="16" viewBox="0 0 17 16"><path d="M1 7C4 2 12 2 16 6C13 10 5 11 1 7Z" fill="#eee" stroke="#555" /><circle cx="9" cy="6" r="2.2" fill="#555" /><circle cx="5.5" cy="10.5" r="4" fill="#fff" stroke="#d8232a" strokeWidth="1.6" /><path d="M3 8L8 13" stroke="#d8232a" strokeWidth="1.6" /></svg>
        </StatusCell>
        <StatusCell $w={24} />
        <StatusCell $w={24} />
        <StatusCell $w={291} $g={4}>
          <svg width="16" height="16" viewBox="0 0 16 16"><circle cx="8" cy="8" r="7.5" fill="#3a7fd8" /><path d="M4 2C2 4 2 7 4 8C6 9 6 11 7 13C8 11 10 10 9 8C8 6 10 5 9 3C7 2 5 2 4 2ZM11 8C13 8 14 9 14 11C13 13 12 12 11 11Z" fill="#3fae3a" /></svg>
          Internet
        </StatusCell>
        <Watermark>KuvatON.com</Watermark>
      </StatusBar>
    </Win>
  );
}
